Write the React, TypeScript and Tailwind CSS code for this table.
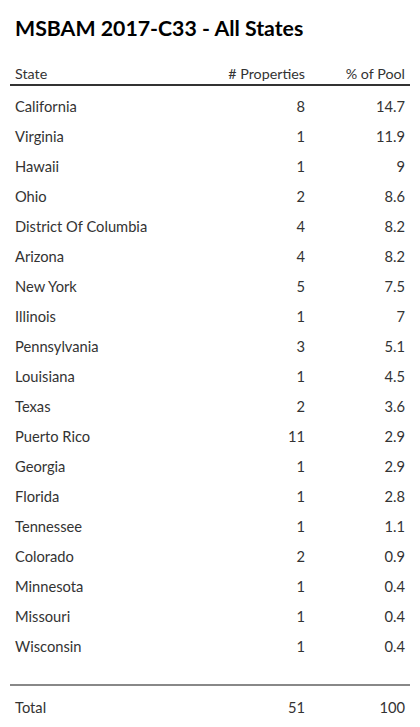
const rows: [string, number, number][] = [
  ['California', 8, 14.7],
  ['Virginia', 1, 11.9],
  ['Hawaii', 1, 9],
  ['Ohio', 2, 8.6],
  ['District Of Columbia', 4, 8.2],
  ['Arizona', 4, 8.2],
  ['New York', 5, 7.5],
  ['Illinois', 1, 7],
  ['Pennsylvania', 3, 5.1],
  ['Louisiana', 1, 4.5],
  ['Texas', 2, 3.6],
  ['Puerto Rico', 11, 2.9],
  ['Georgia', 1, 2.9],
  ['Florida', 1, 2.8],
  ['Tennessee', 1, 1.1],
  ['Colorado', 2, 0.9],
  ['Minnesota', 1, 0.4],
  ['Missouri', 1, 0.4],
  ['Wisconsin', 1, 0.4],
];

const App = () => {
  return (
    <div className="w-[420px] h-[727px] bg-white px-[10px] text-[#333] font-['Lato',sans-serif]">
      {/* Title */}
      <h1 className="pt-[14px] pl-[5px] text-[21.3px] leading-[28px] font-bold text-black">
        MSBAM 2017-C33 - All States
      </h1>

      {/* Header */}
      <div className="mt-[22px] flex items-end h-[22px] border-b-2 border-[#333] text-[14.3px] leading-[20px]">
        <div className="flex-1 pl-[5px]">State</div>
        <div className="w-[120px] text-right pr-[5px]">
          # Properties
        </div>
        <div className="w-[100px] text-right pr-[5px]">% of Pool</div>
      </div>

      {/* Rows */}
      <div className="pt-[5px]">
        {rows.map(([state, count, pct]) => (
          <div key={state} className="flex items-center h-[30px] text-[14.7px]">
            <div className="flex-1 pl-[5px]">{state}</div>
            <div className="w-[120px] text-right pr-[5px]">{count}</div>
            <div className="w-[100px] text-right pr-[5px]">{pct}</div>
          </div>
        ))}
      </div>

      {/* Total */}
      <div className="mt-[23px] border-t-2 border-[#888] flex items-center h-[44px] text-[14.7px]">
        <div className="flex-1 pl-[5px]">Total</div>
        <div className="w-[120px] text-right pr-[5px]">51</div>
        <div className="w-[100px] text-right pr-[5px]">100</div>
      </div>
    </div>
  );
};

export default App;
